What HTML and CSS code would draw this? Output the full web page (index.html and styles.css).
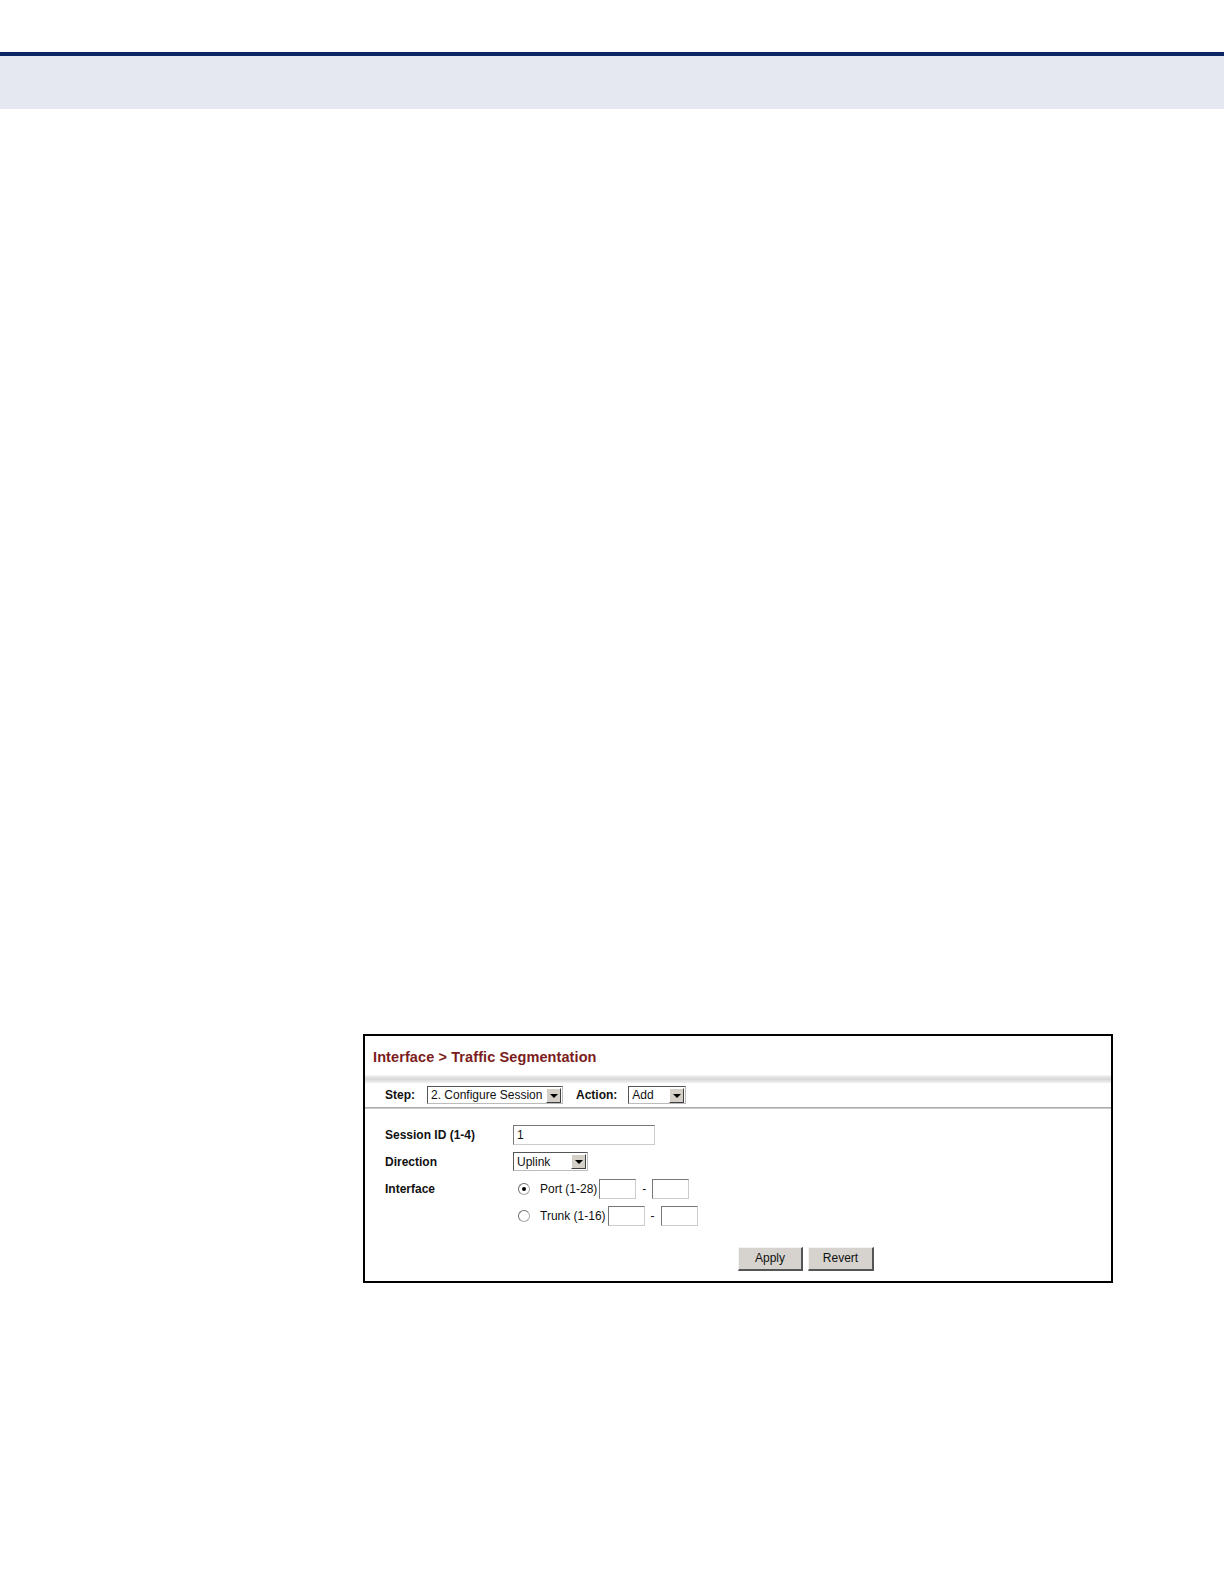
FILE: index.html
```html
<!DOCTYPE html>
<html>
<head>
<meta charset="utf-8">
<link rel="stylesheet" href="styles.css">
</head>
<body>
<div class="topline"></div>
<div class="band"></div>
<div class="panel">
  <div class="title">Interface &gt; Traffic Segmentation</div>
  <div class="sep"></div>
  <div class="steprow">
    <span class="lbl">Step:</span>
    <div class="sel sel-step"><span class="val">2. Configure Session</span><span class="arrow"></span></div>
    <span class="lbl lbl-action">Action:</span>
    <div class="sel sel-action"><span class="val">Add</span><span class="arrow"></span></div>
  </div>
  <div class="rule"></div>
  <div class="form">
    <div class="row r1">
      <span class="flabel">Session ID (1-4)</span>
      <div class="txt txt-wide">1</div>
    </div>
    <div class="row r2">
      <span class="flabel">Direction</span>
      <div class="sel sel-dir"><span class="val">Uplink</span><span class="arrow"></span></div>
    </div>
    <div class="row r3">
      <span class="flabel">Interface</span>
      <div class="opts">
        <div class="opt">
          <span class="radio on"></span><span class="otext">Port (1-28)</span><div class="txt txt-small"></div><span class="dash">-</span><div class="txt txt-small"></div>
        </div>
        <div class="opt opt2">
          <span class="radio"></span><span class="otext">Trunk (1-16)</span><div class="txt txt-small"></div><span class="dash">-</span><div class="txt txt-small"></div>
        </div>
      </div>
    </div>
  </div>
  <div class="buttons">
    <div class="btn btn-apply">Apply</div>
    <div class="btn btn-revert">Revert</div>
  </div>
</div>
</body>
</html>
```
FILE: styles.css
```css
html, body {
  margin: 0;
  padding: 0;
  background: #ffffff;
}
body {
  font-family: "Liberation Sans", Arial, sans-serif;
  font-size: 12px;
  color: #111;
}
.topline {
  margin-top: 52px;
  height: 4px;
  background: #0c2461;
}
.band {
  height: 53px;
  background: #e5e8f0;
}
.panel {
  margin-top: 925px;
  margin-left: 363px;
  width: 746px;
  height: 245px;
  border: 2px solid #000;
  background: #fff;
  display: flex;
  flex-direction: column;
}
.title {
  padding: 13px 0 0 8px;
  height: 20px;
  font-size: 14.5px;
  font-weight: bold;
  color: #7b1c20;
  letter-spacing: 0.1px;
}
.sep {
  height: 8px;
  margin-top: 6px;
  background: linear-gradient(#f6f6f6, #d6d6d6 50%, #f2f2f2);
}
.steprow {
  display: flex;
  align-items: center;
  height: 24px;
  padding-left: 20px;
}
.lbl {
  font-weight: bold;
  font-size: 12px;
}
.lbl-action {
  margin-left: 13px;
}
.sel {
  display: flex;
  align-items: center;
  height: 18px;
  box-sizing: border-box;
  border-top: 1px solid #555;
  border-left: 1px solid #555;
  border-right: 1px solid #bbb;
  border-bottom: 1px solid #bbb;
  background: #fff;
  position: relative;
  font-size: 12px;
}
.sel .val {
  flex: 1;
  padding-left: 3px;
  white-space: nowrap;
  overflow: hidden;
}
.sel .arrow {
  width: 15px;
  height: 15px;
  margin-right: 1px;
  background: #d4d0c8;
  border-right: 1px solid #404040;
  border-bottom: 1px solid #404040;
  border-top: 1px solid #fff;
  border-left: 1px solid #fff;
  box-sizing: border-box;
  position: relative;
}
.sel .arrow::after {
  content: "";
  position: absolute;
  left: 3px;
  top: 5px;
  border-left: 4px solid transparent;
  border-right: 4px solid transparent;
  border-top: 4px solid #000;
}
.sel-step {
  width: 136px;
  margin-left: 12px;
}
.sel-action {
  width: 58px;
  margin-left: 11px;
}
.rule {
  height: 2px;
  background: linear-gradient(#9a9a9a, #dcdcdc);
}
.form {
  padding-left: 20px;
  padding-top: 16px;
  display: flex;
  flex-direction: column;
}
.row {
  display: flex;
  align-items: flex-start;
}
.flabel {
  width: 128px;
  font-weight: bold;
  font-size: 12px;
  line-height: 20px;
}
.r2 {
  margin-top: 7px;
}
.r3 {
  margin-top: 7px;
}
.txt {
  box-sizing: border-box;
  height: 20px;
  border-top: 1px solid #777;
  border-left: 1px solid #777;
  border-right: 1px solid #ccc;
  border-bottom: 1px solid #ccc;
  padding-left: 3px;
  line-height: 18px;
  font-size: 12px;
}
.txt-wide {
  width: 142px;
}
.sel-dir {
  width: 75px;
  height: 19px;
}
.opts {
  display: flex;
  flex-direction: column;
  padding-left: 5px;
}
.opt {
  display: flex;
  align-items: center;
  height: 20px;
}
.opt2 {
  margin-top: 7px;
}
.radio {
  width: 12px;
  height: 12px;
  border-radius: 50%;
  box-sizing: border-box;
  border: 1px solid #aaa;
  border-top-color: #707070;
  border-left-color: #707070;
  background: #fff;
  position: relative;
}
.radio.on::after {
  content: "";
  position: absolute;
  left: 3px;
  top: 3px;
  width: 4px;
  height: 4px;
  border-radius: 50%;
  background: #000;
}
.otext {
  margin-left: 4px;
  margin-right: 2px;
  font-size: 12px;
  padding-left: 6px;
}
.txt-small {
  width: 37px;
}
.dash {
  width: 16px;
  text-align: center;
}
.buttons {
  display: flex;
  margin-top: 21px;
  padding-left: 373px;
  gap: 5px;
}
.btn {
  box-sizing: border-box;
  height: 24px;
  width: 65px;
  background: #d6d3ce;
  border-top: 1px solid #f4f4f4;
  border-left: 1px solid #f4f4f4;
  border-right: 2px solid #555;
  border-bottom: 2px solid #555;
  text-align: center;
  line-height: 21px;
  font-size: 12px;
}
.btn-revert {
  width: 66px;
}
```
